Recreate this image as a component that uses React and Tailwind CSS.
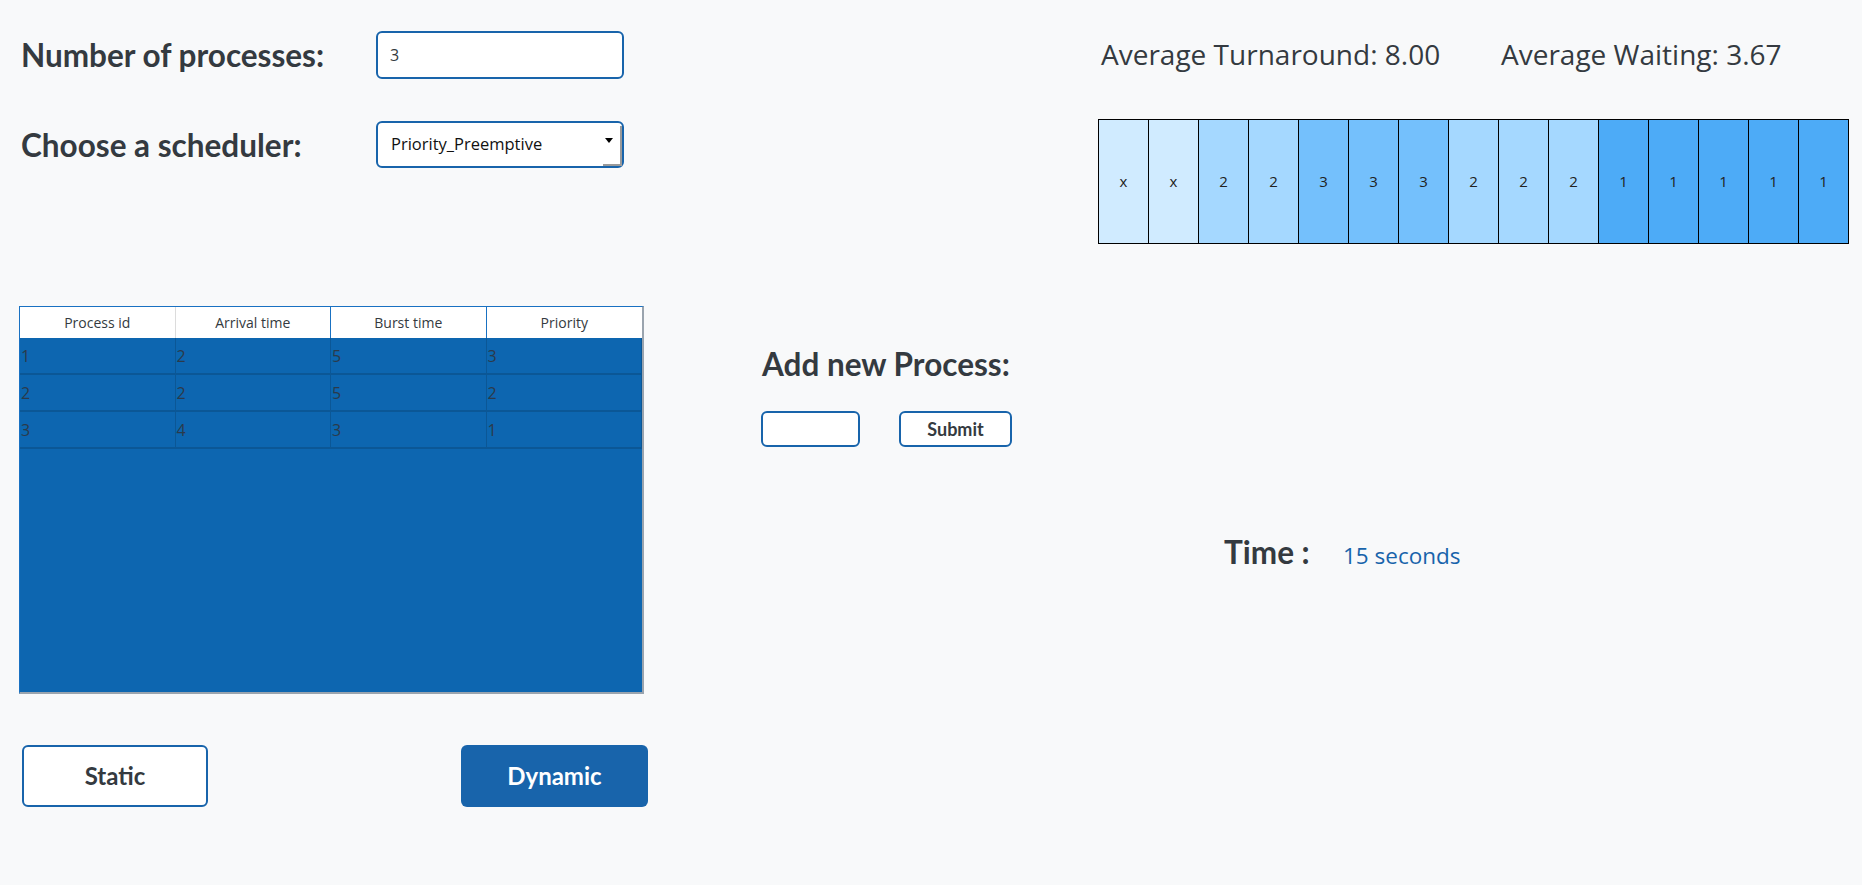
import React from 'react'

const gantt = ['x', 'x', '2', '2', '3', '3', '3', '2', '2', '2', '1', '1', '1', '1', '1']

const cellColor = {
  x: 'bg-[#d0ebff]',
  '2': 'bg-[#a5d8ff]',
  '3': 'bg-[#74c0fc]',
  '1': 'bg-[#4dabf7]',
}

const rows = [
  ['1', '2', '5', '3'],
  ['2', '2', '5', '2'],
  ['3', '4', '3', '1'],
]

export default function App() {
  return (
    <div className="min-h-[885px] bg-[#f8f9fa] text-[#343a40] font-['Lato',sans-serif] flex">
      {/* Left column */}
      <div className="w-[760px] shrink-0 pl-[19px] pt-[31px]">
        <div className="flex items-center">
          <h3 className="w-[357px] pl-[2px] text-[31.5px] leading-[36px] font-bold">Number of processes:</h3>
          <input
            defaultValue="3"
            className="w-[248px] h-[48px] rounded-md border-2 border-[#1864ab] bg-white px-[12px] text-[16px] font-['Open_Sans',sans-serif] outline-none"
          />
        </div>
        <div className="flex items-center mt-[42px]">
          <h3 className="w-[357px] pl-[2px] text-[31.5px] leading-[36px] font-bold">Choose a scheduler:</h3>
          <div className="relative w-[248px] h-[47px] rounded-md border-2 border-[#1864ab] bg-white flex items-center pl-[13px] text-[16.5px] font-['Open_Sans',sans-serif] text-[#111]">
            Priority_Preemptive
            <span className="absolute right-[9px] top-[15px] w-0 h-0 border-l-[4px] border-r-[4px] border-t-[5px] border-l-transparent border-r-transparent border-t-black" />
            <span className="absolute right-[1px] bottom-0 w-[18px] h-[2px] bg-[#9a9a9a]" />
            <span className="absolute right-0 bottom-0 w-[2px] h-[40px] bg-[#9a9a9a]" />
          </div>
        </div>

        {/* Process table */}
        <div className="mt-[138px] w-[625px] h-[388px] bg-[#0d66b0] border-t border-t-[#1971c2] border-r-2 border-r-[#9aa4ae] border-b-2 border-b-[#9aa4ae] border-l border-l-[#1971c2] font-['Open_Sans',sans-serif]">
          <div className="grid grid-cols-4 h-[31px] bg-white text-[14px] text-[#343a40]">
            <div className="flex items-center justify-center border-r border-[#dcdcdc]">Process id</div>
            <div className="flex items-center justify-center border-r border-[#1971c2]">Arrival time</div>
            <div className="flex items-center justify-center border-r border-[#1971c2]">Burst time</div>
            <div className="flex items-center justify-center">Priority</div>
          </div>
          {rows.map((r, i) => (
            <div key={i} className="grid grid-cols-4 h-[37px] border-b-2 border-[#0b5796] text-[16px] text-[#2b3a4a]">
              {r.map((c, j) => (
                <div key={j} className="flex items-center pl-[1px] border-r border-[#0b5796]">{c}</div>
              ))}
            </div>
          ))}
        </div>

        <div className="flex mt-[51px] pl-[3px]">
          <button className="w-[186px] h-[62px] rounded-md border-2 border-[#1864ab] bg-white text-[24px] font-bold text-[#343a40]">
            Static
          </button>
          <button className="ml-[253px] w-[187px] h-[62px] rounded-md bg-[#1864ab] text-[24px] font-bold text-white">
            Dynamic
          </button>
        </div>
      </div>

      {/* Right column */}
      <div className="flex-1">
        <div className="ml-[338px] pt-[37px]">
          <div className="flex text-[28px] leading-[34px] text-[#343a40] pl-[3px] font-['Open_Sans',sans-serif]">
            <span className="w-[400px]">Average Turnaround: 8.00</span>
            <span>Average Waiting: 3.67</span>
          </div>
          <div className="mt-[48px] flex w-[751px] h-[125px] border-l border-t border-b border-black font-['Open_Sans',sans-serif]">
            {gantt.map((g, i) => (
              <div
                key={i}
                className={`w-[50px] h-full border-r border-black flex items-center justify-center text-[15px] text-[#222] ${cellColor[g]}`}
              >
                {g}
              </div>
            ))}
          </div>
        </div>

        <h3 className="mt-[102px] pl-[2px] text-[31.5px] leading-[36px] font-bold">Add new Process:</h3>
        <div className="flex mt-[29px] pl-[1px]">
          <input className="w-[99px] h-[36px] rounded-md border-2 border-[#1864ab] bg-white outline-none" />
          <button className="ml-[39px] w-[113px] h-[36px] rounded-md border-2 border-[#1864ab] bg-white text-[18px] font-bold text-[#343a40]">
            Submit
          </button>
        </div>

        <div className="flex items-baseline mt-[87px] ml-[464px]">
          <h3 className="w-[119px] text-[31.5px] leading-[36px] font-bold">Time :</h3>
          <span className="text-[22.5px] text-[#1864ab] font-['Open_Sans',sans-serif]">15 seconds</span>
        </div>
      </div>
    </div>
  )
}
